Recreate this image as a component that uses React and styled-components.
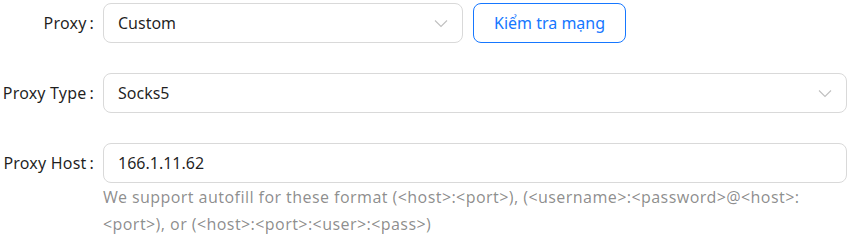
import React from "react";
import styled, { createGlobalStyle } from "styled-components";

const Global = createGlobalStyle`
  html, body { margin: 0; padding: 0; background: #fff; }
  body { font-family: "Noto Sans", "Open Sans", sans-serif; font-size: 16px; color: rgba(0,0,0,0.88); }
  * { box-sizing: border-box; }
`;

const Form = styled.div`
  display: flex;
  flex-direction: column;
  gap: 30px;
  padding: 3px 7px 0 0;
  width: 854px;
`;

const Row = styled.div`
  display: grid;
  grid-template-columns: 103px 1fr;
  align-items: start;
`;

const Label = styled.label`
  height: 40px;
  display: flex;
  align-items: center;
  justify-content: flex-end;
  padding-right: 9px;
  white-space: nowrap;
  color: rgba(0,0,0,0.88);
  letter-spacing: 0.2px;
`;

const Colon = styled.span`
  margin-left: 3px;
`;

const Controls = styled.div`
  display: flex;
  gap: 10px;
  align-items: center;
`;

const Box = styled.div`
  height: 40px;
  width: ${(p) => (p.$width ? `${p.$width}px` : "100%")};
  border: 1px solid #d9d9d9;
  border-radius: 8px;
  display: flex;
  align-items: center;
  padding: 0 14px 0 14px;
  background: #fff;
`;

const Value = styled.span`
  flex: 1;
  color: rgba(0,0,0,0.88);
`;

const Button = styled.button`
  height: 40px;
  padding: 0 20px;
  border: 1px solid #1677ff;
  border-radius: 8px;
  background: #fff;
  color: #1677ff;
  font: inherit;
  cursor: pointer;
`;

const Help = styled.div`
  color: rgba(0,0,0,0.45);
  line-height: 27px;
  margin-top: 1px;
  letter-spacing: 0.4px;
  white-space: nowrap;
`;

const Chevron = () => (
  <svg width="14" height="14" viewBox="0 0 14 14" fill="none">
    <path d="M1 4.5 L7 10.5 L13 4.5" stroke="rgba(0,0,0,0.25)" strokeWidth="1.1" />
  </svg>
);

export default function App() {
  return (
    <>
      <Global />
      <Form>
        <Row>
          <Label>Proxy<Colon>:</Colon></Label>
          <Controls>
            <Box $width={360}>
              <Value>Custom</Value>
              <Chevron />
            </Box>
            <Button>Kiểm tra mạng</Button>
          </Controls>
        </Row>
        <Row>
          <Label>Proxy Type<Colon>:</Colon></Label>
          <Box>
            <Value>Socks5</Value>
            <Chevron />
          </Box>
        </Row>
        <Row>
          <Label>Proxy Host<Colon>:</Colon></Label>
          <div>
            <Box>
              <Value>166.1.11.62</Value>
            </Box>
            <Help>
              We support autofill for these format (&lt;host&gt;:&lt;port&gt;), (&lt;username&gt;:&lt;password&gt;@&lt;host&gt;:
              <br />
              &lt;port&gt;), or (&lt;host&gt;:&lt;port&gt;:&lt;user&gt;:&lt;pass&gt;)
            </Help>
          </div>
        </Row>
      </Form>
    </>
  );
}
